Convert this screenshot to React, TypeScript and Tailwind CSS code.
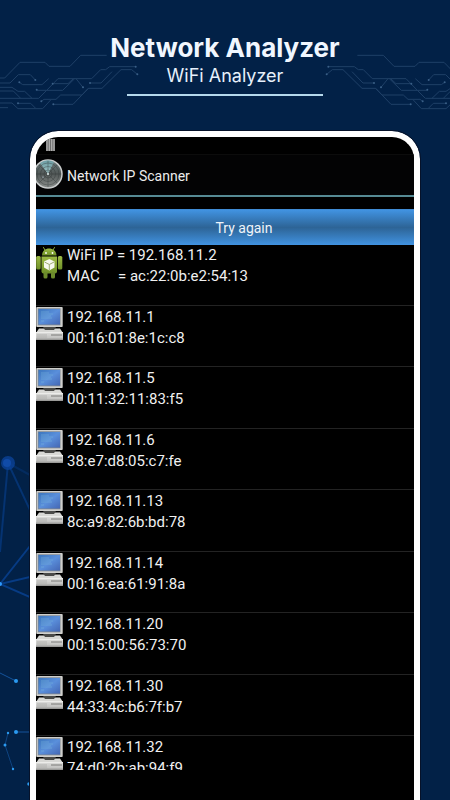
import { useId } from 'react';

const hosts = [
  { ip: '192.168.11.1', mac: '00:16:01:8e:1c:c8' },
  { ip: '192.168.11.5', mac: '00:11:32:11:83:f5' },
  { ip: '192.168.11.6', mac: '38:e7:d8:05:c7:fe' },
  { ip: '192.168.11.13', mac: '8c:a9:82:6b:bd:78' },
  { ip: '192.168.11.14', mac: '00:16:ea:61:91:8a' },
  { ip: '192.168.11.20', mac: '00:15:00:56:73:70' },
  { ip: '192.168.11.30', mac: '44:33:4c:b6:7f:b7' },
  { ip: '192.168.11.32', mac: '74:d0:2b:ab:94:f9' },
];

const nodes = [
  [407, 140], [412, 163], [106, 180], [58, 187], [158, 191], [110, 209], [270, 189], [249, 202], [124, 244], [54, 250], [160, 253],
];

function Circuit({ className }: { className: string }) {
  return (
    <svg className={className} width="140" height="100" viewBox="0 0 420 300" fill="none" stroke="#1f4067" strokeWidth="3" aria-hidden="true">
      <path d="M320 106H242L210 139H147L135 127H60L14 174H0" />
      <path d="M407 140H329L317 149H302L275 176H174L140 211H110" />
      <path d="M412 163L395 149H363L306 205H265L219 253H160" />
      <path d="M0 189H30L55 164H91L106 180" />
      <path d="M58 187L68 194H126L146 176" />
      <path d="M158 191H204L220 176M228 176L249 202" />
      <path d="M270 189H303L336 155" />
      <path d="M0 202H36L54 214H74L96 235H116L140 211H188L224 176" />
      <path d="M0 213H40L62 235M0 235H96" />
      <path d="M124 244L132 238H168L182 225H246L265 205" />
      <path d="M0 249H36L54 266H128L152 240" />
      <path d="M54 250H92L106 264M0 263H24" />
      {nodes.map(([cx, cy]) => (
        <circle key={`${cx}-${cy}`} cx={cx} cy={cy} r="3" fill="#3a5f86" stroke="none" />
      ))}
    </svg>
  );
}

function Constellation() {
  return (
    <svg className="absolute left-0 top-[430px]" width="30" height="370" viewBox="0 0 30 370" fill="none" aria-hidden="true">
      <g stroke="#0a4aa5" strokeWidth="2" opacity="0.65">
        <path d="M8 33L30 80" opacity="0.7" />
        <path d="M8 33L0 122" opacity="0.7" />
        <path d="M8 33L30 45" opacity="0.4" />
        <path d="M0 154L30 116" />
        <path d="M0 154L30 147" />
        <path d="M0 154L30 167" />
      </g>
      <circle cx="8" cy="33" r="7" fill="#0b4297" opacity="0.8" />
      <circle cx="7" cy="33" r="4" fill="#104ba8" />
      <circle cx="0" cy="154" r="2" fill="#2f9bff" />
      <g stroke="#14539a" strokeWidth="1">
        <path d="M0 243L16 251" />
        <path d="M30 302H16" />
        <path d="M8 303L5 315L13 339" opacity="0.7" />
      </g>
      <g fill="#2b9af0">
        <circle cx="16" cy="251" r="2" />
        <circle cx="16" cy="302" r="2" />
        <circle cx="8" cy="303" r="1.2" />
        <circle cx="5" cy="315" r="1.5" />
        <circle cx="13" cy="339" r="1.2" />
        <circle cx="29" cy="354" r="1.8" />
      </g>
    </svg>
  );
}

function RadarIcon() {
  return (
    <svg className="-ml-1 h-8 w-8 shrink-0" viewBox="0 0 32 32" aria-hidden="true">
      <defs>
        <linearGradient id="radarFace" x1="0" y1="0" x2="0" y2="1">
          <stop offset="0" stopColor="#6d7c7d" />
          <stop offset="0.5" stopColor="#515756" />
          <stop offset="1" stopColor="#8b8f8d" />
        </linearGradient>
        <linearGradient id="radarSweep" x1="0" y1="0" x2="0" y2="1">
          <stop offset="0" stopColor="#6ba5ad" />
          <stop offset="1" stopColor="#b5dfe1" />
        </linearGradient>
      </defs>
      <circle cx="16" cy="15" r="14" fill="url(#radarFace)" stroke="#c9cccc" strokeWidth="1.5" />
      <path d="M16 15L8 4A13 13 0 0 1 22 3Z" fill="url(#radarSweep)" opacity="0.8" />
      <g fill="none" stroke="#2b3333" strokeWidth="0.6" opacity="0.6">
        <circle cx="16" cy="15" r="4" />
        <circle cx="16" cy="15" r="7.5" />
        <circle cx="16" cy="15" r="11" />
        <path d="M16 2V28M3 15H29M7 6L25 24M25 6L7 24" />
      </g>
      <circle cx="16" cy="15" r="1" fill="#e8f5f5" />
      <circle cx="11" cy="18" r="0.6" fill="#cde" />
    </svg>
  );
}

function AndroidIcon() {
  return (
    <svg className="mt-0.5 h-8 w-[27px] shrink-0" viewBox="0 0 27 32" aria-hidden="true">
      <defs>
        <linearGradient id="droid" x1="0" y1="0" x2="0" y2="1">
          <stop offset="0" stopColor="#9dbb45" />
          <stop offset="1" stopColor="#6f9028" />
        </linearGradient>
      </defs>
      <path d="M7.500 0.5L9.500 4M18.500 0.5L16.500 4" stroke="#8fae3a" strokeWidth="1" strokeLinecap="round" />
      <path d="M6 8.500C6 4 9.500 1.500 13 1.500S20.500 4 20.500 8.500Z" fill="url(#droid)" />
      <rect x="0.200" y="9" width="4.500" height="13.500" rx="1.500" fill="url(#droid)" />
      <rect x="21.800" y="9" width="4.500" height="13.500" rx="1.500" fill="url(#droid)" />
      <path d="M5.500 9.500H21V24.500Q21 26.500 19 26.500H7.500Q5.500 26.500 5.500 24.500Z" fill="url(#droid)" />
      <rect x="7.500" y="25" width="4" height="6.500" rx="1.500" fill="#6d8b2c" />
      <rect x="15" y="25" width="4" height="6.500" rx="1.500" fill="#6d8b2c" />
      <circle cx="10" cy="6" r="0.9" fill="#fff" />
      <circle cx="16.500" cy="6" r="0.9" fill="#fff" />
      <path d="M13.300 12L18.500 14.500V20.500L13.300 23.500L8 20.500V14.500Z" fill="#f6f8ee" />
      <path d="M8.500 15L13.300 17.500L18 15M13.300 17.500V23" fill="none" stroke="#9dab72" strokeWidth="1" />
    </svg>
  );
}

function ComputerIcon() {
  const id = useId();
  return (
    <svg className="mt-px h-[33px] w-[27px] shrink-0" viewBox="0 0 27 33" aria-hidden="true">
      <defs>
        <linearGradient id={`${id}s`} x1="0" y1="0" x2="1" y2="1">
          <stop offset="0" stopColor="#3b76bd" />
          <stop offset="0.5" stopColor="#5a8fdb" />
          <stop offset="1" stopColor="#4467b4" />
        </linearGradient>
        <linearGradient id={`${id}b`} x1="0" y1="0" x2="0" y2="1">
          <stop offset="0" stopColor="#dededc" />
          <stop offset="0.7" stopColor="#c4c4c2" />
          <stop offset="1" stopColor="#8f8f8d" />
        </linearGradient>
      </defs>
      <rect x="0.300" y="0" width="26.400" height="20" rx="0.800" fill="#cfcfcc" />
      <rect x="1.800" y="1.300" width="22.700" height="17" fill="#7d858f" />
      <rect x="2.500" y="2" width="21.500" height="15.500" fill={`url(#${id}s)`} />
      <path d="M5 5H13M5 7H17M5 9H15M5 11H16M5 14H8" stroke="#79b5dd" strokeWidth="0.700" opacity="0.800" />
      <path d="M3 21.500H24L27 26H0Z" fill="#d8d8d5" />
      <path d="M7 20H20L18 23H9Z" fill="#4a4a48" />
      <rect x="0" y="25" width="27" height="8" rx="0.500" fill={`url(#${id}b)`} />
      <path d="M0 25.500H27" stroke="#f0f0ee" strokeWidth="0.800" />
      <path d="M1 28H11M1 30H11" stroke="#aaaaa7" strokeWidth="0.700" />
      <path d="M15 28H26" stroke="#70706e" strokeWidth="0.900" />
    </svg>
  );
}

export default function App() {
  return (
    <div className="relative flex h-screen flex-col overflow-hidden bg-[#022147] font-['Roboto','Liberation_Sans',sans-serif] text-white">
      <Constellation />

      <header className="relative flex flex-col items-center pt-8">
        <Circuit className="absolute left-0 top-5" />
        <Circuit className="absolute -right-3.5 top-5 -scale-x-100" />
        <h1 className="relative font-['Inter',sans-serif] text-[26px] leading-8 font-bold text-[#f1f7ff]">Network Analyzer</h1>
        <p className="relative font-['Inter',sans-serif] text-lg leading-6 text-[#e6f0fb]">WiFi Analyzer</p>
        <div className="mt-1.5 h-0.5 w-[196px] bg-[#b5d8ec]" />
      </header>

      <main className="relative mx-[30px] mt-[35px] flex min-h-0 flex-1 flex-col overflow-hidden rounded-t-[28px] border-6 border-b-0 border-white bg-black outline-1 outline-[#06122a]">
        <div className="flex h-[18px] shrink-0 items-start border-b border-[#0c0c0c] pl-2.5 pt-0.5">
          <svg className="h-3 w-[9px]" viewBox="0 0 9 12" aria-hidden="true">
            <rect width="9" height="12" fill="#6c6c6c" />
            <path d="M1 0V12M3.300 0V12M5.700 0V12M8 0V12" stroke="#b4b4b4" strokeWidth="1.200" />
          </svg>
        </div>

        <div className="flex h-[42px] shrink-0 items-center gap-[3px] border-b-2 border-[#568a94] bg-[#030304]">
          <RadarIcon />
          <h2 className="pt-0.5 text-sm leading-5 text-[#ececec]">Network IP Scanner</h2>
        </div>

        <button
          type="button"
          className="mt-3 h-9 shrink-0 border-t border-[#3f8bd4] bg-linear-to-b from-[#4193e2] via-[#2d6496] to-[#4193e2] pl-9.5 text-sm text-[#eef4fa]"
        >
          Try again
        </button>

        <ul className="mb-[30px] min-h-0 flex-1 overflow-hidden text-[15px] leading-[21px] text-[#f0f0f0]">
          <li className="flex h-[61px] gap-1 border-b border-[#232323]">
            <AndroidIcon />
            <div>
              <p>WiFi IP = 192.168.11.2</p>
              <p className="flex">
                <span className="w-[51px]">MAC</span>
                <span>= ac:22:0b:e2:54:13</span>
              </p>
            </div>
          </li>
          {hosts.map((host) => (
            <li key={host.ip} className="flex h-[61px] gap-1 border-b border-[#232323] odd:h-[62px]">
              <ComputerIcon />
              <div className="pt-px">
                <p>{host.ip}</p>
                <p>{host.mac}</p>
              </div>
            </li>
          ))}
        </ul>
      </main>
    </div>
  );
}
